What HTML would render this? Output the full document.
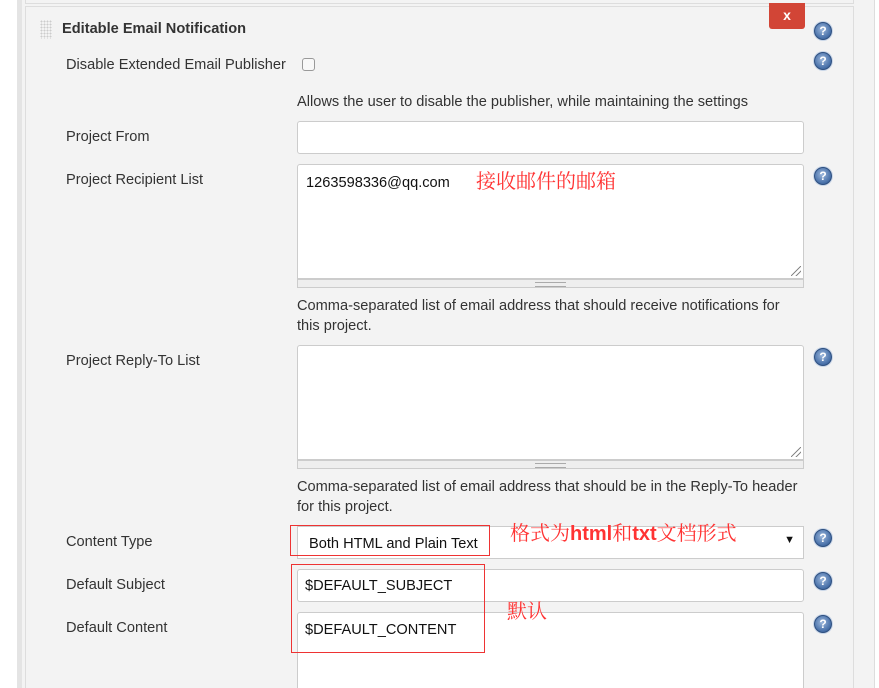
<!DOCTYPE html>
<html style="overflow:hidden;height:688px"><head><meta charset="utf-8"><style>
body{margin:0;width:879px;height:688px;overflow:hidden;background:#fff;font-family:"Liberation Sans",Arial,sans-serif;font-size:14.6px;color:#333;position:relative}
.a{position:absolute}
.lbl{position:absolute;left:66px;font-size:14.6px;color:#333}
.inp{position:absolute;left:297px;width:507px;background:#fff;border:1px solid #ccc;border-radius:3px;box-sizing:border-box}
.help{position:absolute;left:814px;width:16px;height:16px;border-radius:50%;background:radial-gradient(circle at 45% 40%,#9db8dc,#4a72aa 65%,#2b4f82);border:1px solid #2d4f80;box-shadow:0 0 0 1px #c9d6e8;color:#fff;font:bold 12px/16px "Liberation Sans",sans-serif;text-align:center}
.desc{position:absolute;left:297px;font-size:14.6px;color:#333;line-height:20px;width:505px}
.grip{position:absolute;left:297px;width:507px;height:9px;background:#eee;border:1px solid #ccc;box-sizing:border-box}
.grip:after{content:"";position:absolute;left:237px;top:2px;width:31px;height:3px;border-top:1px solid #aaa;border-bottom:1px solid #aaa}
.cn{position:absolute;color:#f33;font-family:"Noto Serif CJK SC","Liberation Sans",serif;font-size:20px;line-height:24px}
.rbox{position:absolute;border:1px solid #e33}
.rs{position:absolute;width:10px;height:10px;background:linear-gradient(135deg,transparent 45%,#888 46%,#888 54%,transparent 55%,transparent 70%,#888 71%,#888 79%,transparent 80%)}
</style></head><body>
<div class="a" style="left:17px;top:0;width:5px;height:688px;background:#e4e4e4"></div>
<div class="a" style="left:22px;top:0;width:852px;height:688px;background:#f3f3f3;border-right:1px solid #ddd"></div>
<div class="a" style="left:25px;top:0;width:827px;height:3px;border:1px solid #ddd;border-top:none;background:#f3f3f3"></div>
<div class="a" style="left:25px;top:6px;width:827px;height:682px;border:1px solid #ddd;border-bottom:none;background:#f3f3f3"></div>
<div class="a" style="left:40px;top:20px;width:12px;height:19px;background-image:radial-gradient(#ccc 0.8px,transparent 0.9px);background-size:3px 3px"></div>
<div class="a" style="left:62px;top:21px;font-weight:bold;font-size:14.6px;color:#333">Editable Email Notification</div>
<div class="a" style="left:769px;top:3px;width:36px;height:26px;background:#d24536;border-radius:0 0 3px 3px;color:#fff;font-weight:bold;font-size:14px;text-align:center;line-height:24px">x</div>
<div class="help" style="top:22px">?</div>
<div class="lbl" style="top:57px">Disable Extended Email Publisher</div>
<div class="a" style="left:302px;top:58px;width:11px;height:11px;border:1px solid #999;border-radius:3px;background:#f8f8f8"></div>
<div class="help" style="top:52px">?</div>
<div class="desc" style="top:92px;width:520px">Allows the user to disable the publisher, while maintaining the settings</div>
<div class="lbl" style="top:129px">Project From</div>
<div class="inp" style="top:121px;height:33px"></div>
<div class="lbl" style="top:172px">Project Recipient List</div>
<div class="inp" style="top:164px;height:115px;border-radius:3px 3px 0 0"><div class="a" style="left:8px;top:10px;color:#111">1263598336@qq.com</div><div class="rs" style="right:2px;bottom:2px"></div></div>
<div class="grip" style="top:279px"></div>
<div class="cn" style="left:476px;top:168px">接收邮件的邮箱</div>
<div class="help" style="top:167px">?</div>
<div class="desc" style="top:296px">Comma-separated list of email address that should receive notifications for this project.</div>
<div class="lbl" style="top:353px">Project Reply-To List</div>
<div class="inp" style="top:345px;height:115px;border-radius:3px 3px 0 0"><div class="rs" style="right:2px;bottom:2px"></div></div>
<div class="grip" style="top:460px"></div>
<div class="help" style="top:348px">?</div>
<div class="desc" style="top:477px">Comma-separated list of email address that should be in the Reply-To header for this project.</div>
<div class="lbl" style="top:534px">Content Type</div>
<div class="inp" style="top:526px;height:33px;border-radius:0"><div class="a" style="left:11px;top:9px;color:#111">Both HTML and Plain Text</div><div class="a" style="right:8px;top:7px;font-size:11px;color:#111">▼</div></div>
<div class="rbox" style="left:290px;top:525px;width:198px;height:29px"></div>
<div class="cn" style="left:510px;top:520px">格式为<b style="font-family:'Liberation Sans',sans-serif">html</b>和<b style="font-family:'Liberation Sans',sans-serif">txt</b>文档形式</div>
<div class="help" style="top:529px">?</div>
<div class="lbl" style="top:577px">Default Subject</div>
<div class="inp" style="top:569px;height:33px"><div class="a" style="left:7px;top:8px;color:#111">$DEFAULT_SUBJECT</div></div>
<div class="help" style="top:572px">?</div>
<div class="lbl" style="top:620px">Default Content</div>
<div class="inp" style="top:612px;height:76px;border-bottom:none;border-radius:3px 3px 0 0"><div class="a" style="left:7px;top:9px;color:#111">$DEFAULT_CONTENT</div></div>
<div class="help" style="top:615px">?</div>
<div class="rbox" style="left:291px;top:564px;width:192px;height:87px"></div>
<div class="cn" style="left:507px;top:598px">默认</div>
</body></html>
